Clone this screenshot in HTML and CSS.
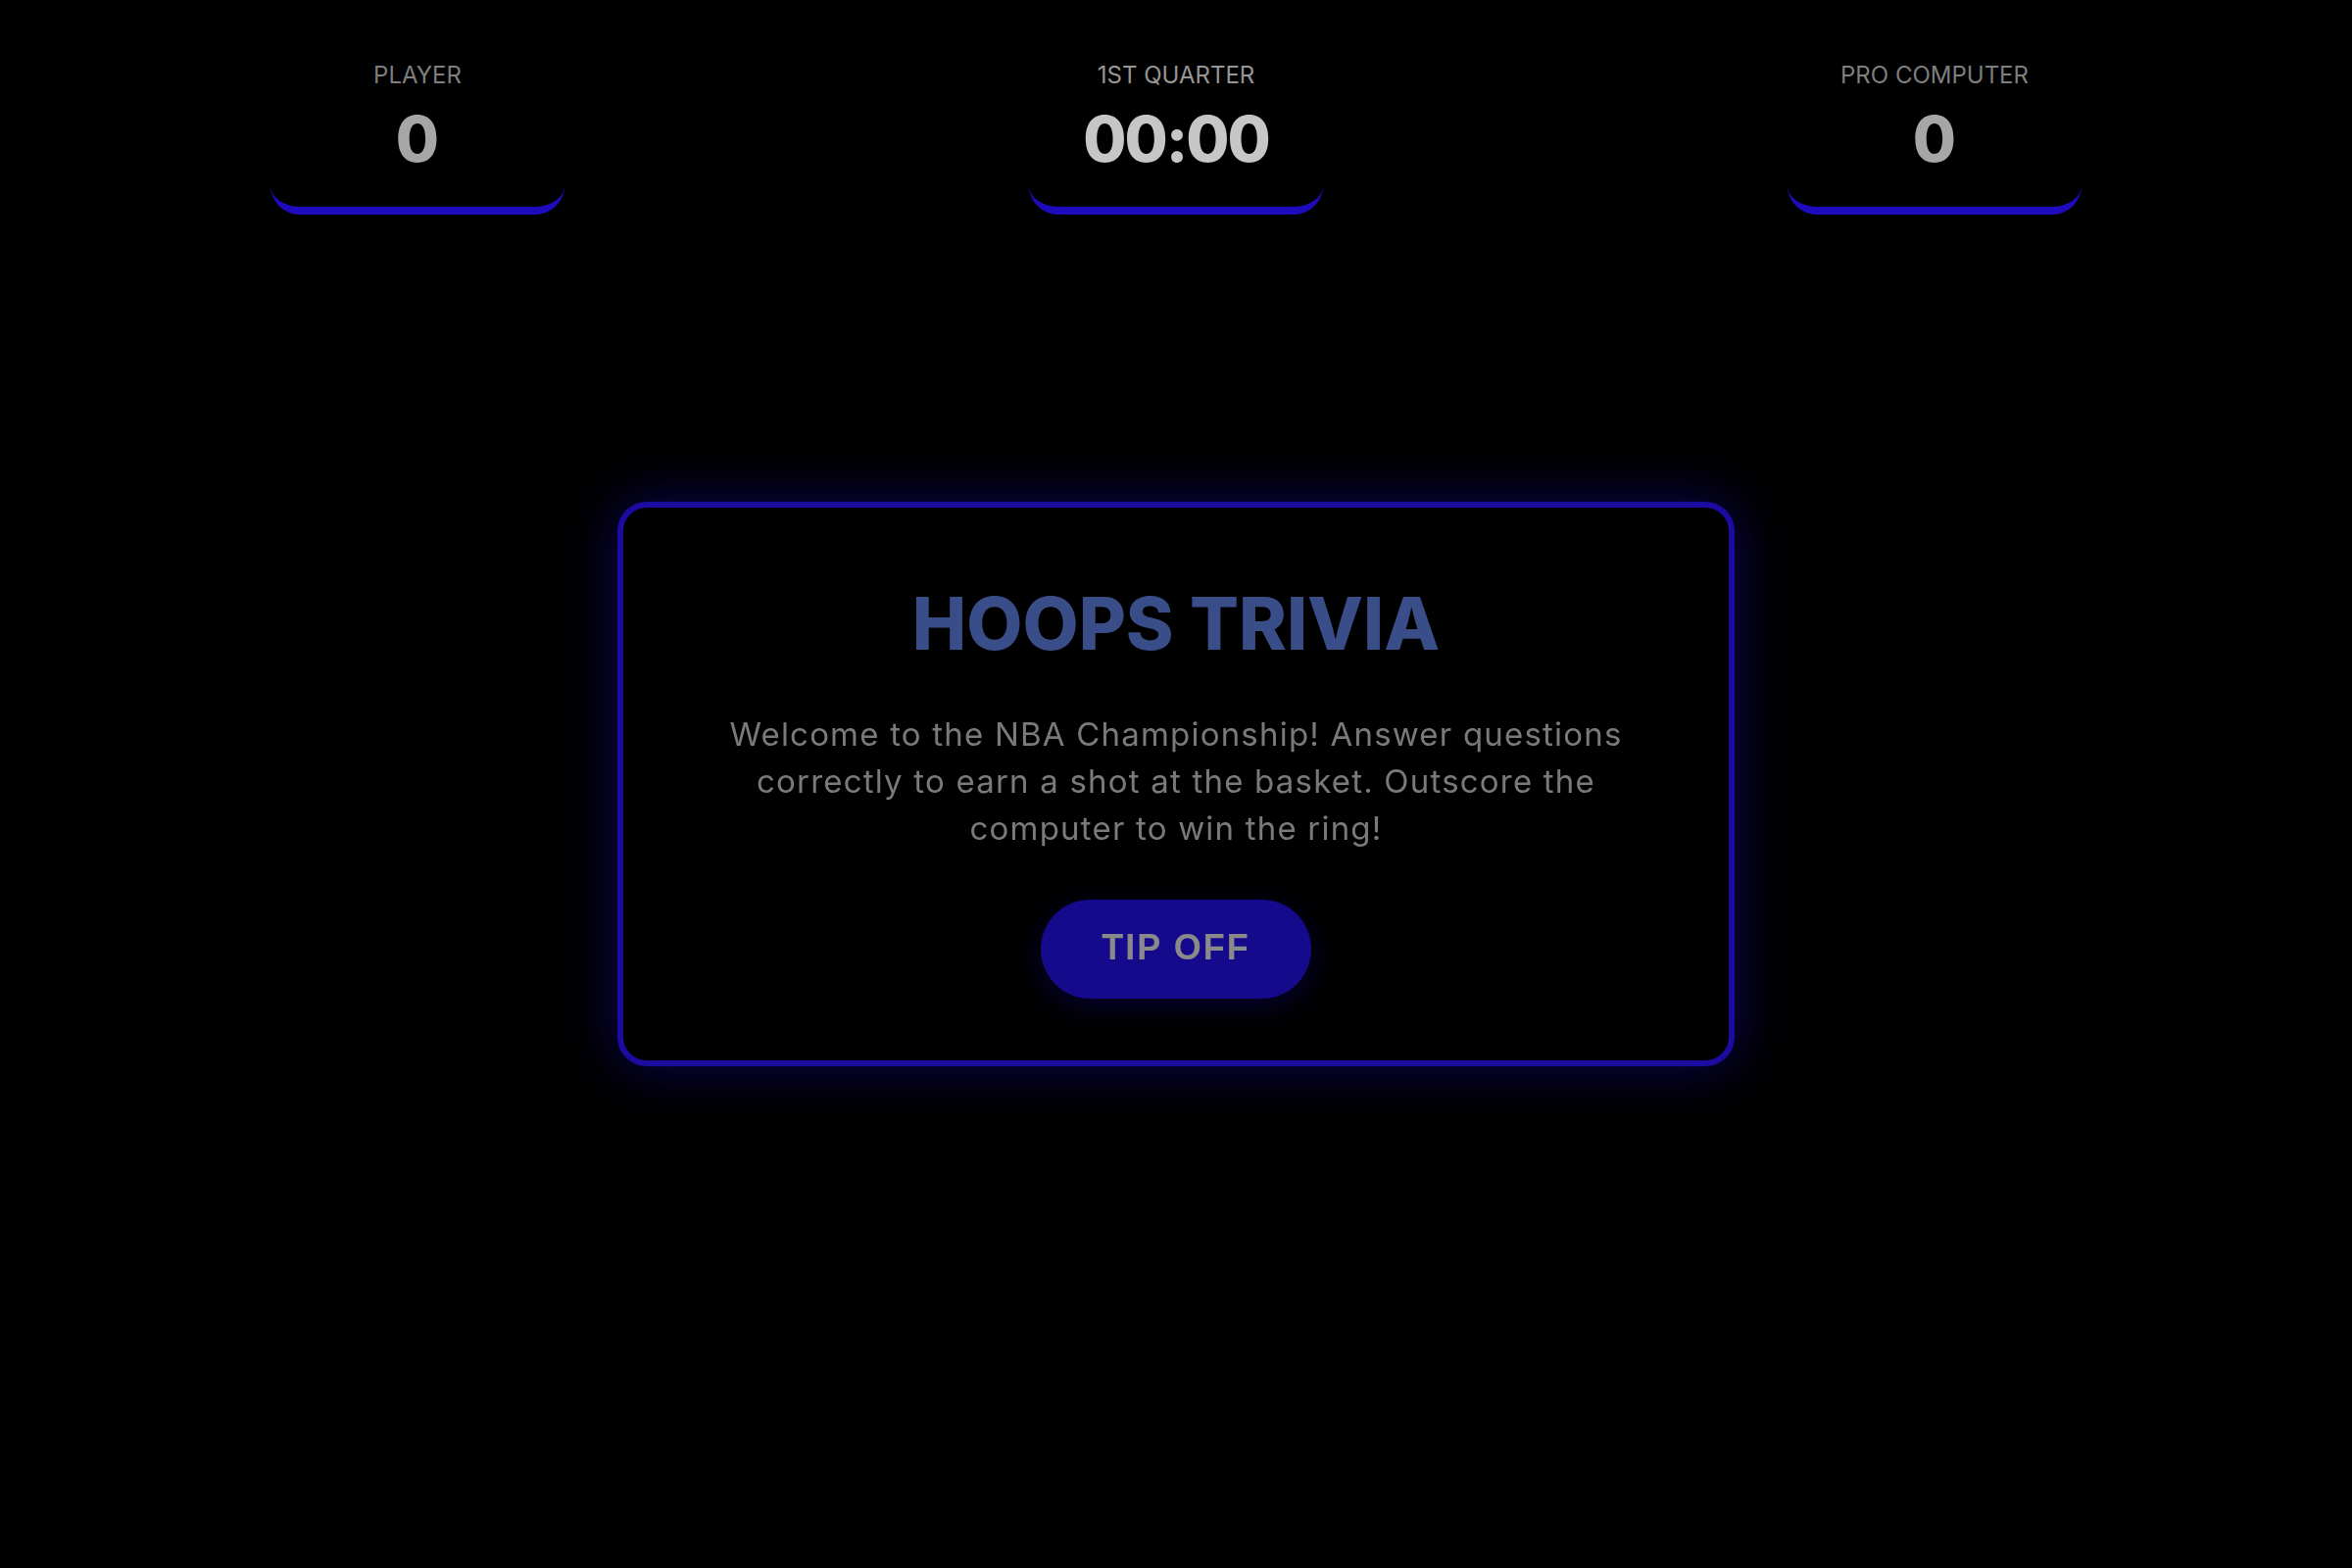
FILE: index.html
```html
<!DOCTYPE html>
<html lang="en">
<head>
<meta charset="utf-8">
<title>Hoops Trivia</title>
<link rel="stylesheet" href="styles.css">
</head>
<body>
  <header class="scoreboard">
    <div class="score-box">
      <div class="score-label">PLAYER</div>
      <div class="score-value">0</div>
    </div>
    <div class="score-box">
      <div class="score-label quarter">1ST QUARTER</div>
      <div class="score-value timer">00:00</div>
    </div>
    <div class="score-box">
      <div class="score-label">PRO COMPUTER</div>
      <div class="score-value">0</div>
    </div>
  </header>

  <div class="overlay">
    <section class="start-card">
      <h1 class="title">HOOPS TRIVIA</h1>
      <p class="intro">Welcome to the NBA Championship! Answer questions correctly to earn a shot at the basket. Outscore the computer to win the ring!</p>
      <button class="tip-off">TIP OFF</button>
    </section>
  </div>
</body>
</html>
```

FILE: styles.css
```css
* {
  box-sizing: border-box;
}

html, body {
  margin: 0;
  padding: 0;
  background: #000;
  min-height: 100vh;
  font-family: "Inter", "Liberation Sans", sans-serif;
}

.scoreboard {
  display: flex;
  justify-content: space-between;
  max-width: 1848px;
  margin: 0 auto;
}

.score-box {
  width: 300px;
  padding: 62px 0 37px;
  display: flex;
  flex-direction: column;
  align-items: center;
  gap: 18px;
  border-bottom: 8px solid #1d0bbd;
  border-radius: 0 0 30px 30px;
  background: #000;
}

.score-label {
  font-size: 24px;
  line-height: 30px;
  font-weight: 400;
  color: #7e7e7e;
}

.score-label.quarter {
  color: #969696;
}

.score-value {
  font-size: 64px;
  line-height: 64px;
  font-weight: 800;
  color: #a6a6a6;
}

.score-value.timer {
  color: #c6c6c6;
  letter-spacing: -2px;
}

.overlay {
  position: fixed;
  inset: 0;
  display: flex;
  align-items: center;
  justify-content: center;
}

.start-card {
  width: 1140px;
  padding: 73px 60px 63px;
  border: 6px solid #1b0b9e;
  border-radius: 30px;
  background: #000;
  box-shadow: 0 0 55px rgba(28, 10, 190, 0.45);
  display: flex;
  flex-direction: column;
  align-items: center;
  text-align: center;
}

.title {
  margin: 0;
  font-size: 74px;
  line-height: 90px;
  font-weight: 800;
  color: #394e88;
  letter-spacing: 0;
}

.intro {
  margin: 44px 0 0;
  max-width: 960px;
  font-size: 33px;
  line-height: 48px;
  font-weight: 400;
  color: #7a7a7a;
  letter-spacing: 1.2px;
}

.tip-off {
  margin-top: 49px;
  padding: 28px 62px 32px;
  font-family: "Liberation Sans", Arial, sans-serif;
  font-size: 36px;
  line-height: 41px;
  font-weight: 700;
  letter-spacing: 2px;
  color: #8a8a8a;
  background: #150a8c;
  border: none;
  border-radius: 60px;
  box-shadow: 0 8px 30px rgba(20, 10, 140, 0.35);
  cursor: pointer;
}
```
